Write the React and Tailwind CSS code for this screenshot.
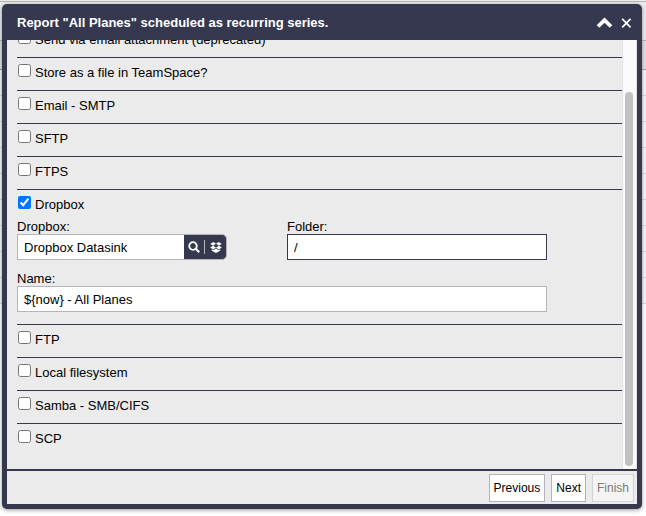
import React, { useState } from 'react';

const destinationsBefore = [
  { id: 'attachment', label: 'Send via email attachment (deprecated)' },
  { id: 'teamspace', label: 'Store as a file in TeamSpace?' },
  { id: 'smtp', label: 'Email - SMTP' },
  { id: 'sftp', label: 'SFTP' },
  { id: 'ftps', label: 'FTPS' },
];

const destinationsAfter = [
  { id: 'ftp', label: 'FTP' },
  { id: 'local', label: 'Local filesystem' },
  { id: 'samba', label: 'Samba - SMB/CIFS' },
  { id: 'scp', label: 'SCP' },
];

function Destination({ id, label, checked, onToggle, children }) {
  return (
    <div className="border-b border-[#36384f] last:border-b-0">
      <div className="flex h-8 items-start pt-1.5">
        <input
          id={id}
          type="checkbox"
          checked={checked}
          onChange={() => onToggle(id)}
          className="ml-px size-[13px] shrink-0 accent-[#0075ff]"
        />
        <label htmlFor={id} className="ml-1 pt-px leading-4">{label}</label>
      </div>
      {children}
    </div>
  );
}

// Grid of the page that the dialog is opened over
function PageBehind() {
  return (
    <div className="absolute inset-0 -z-10 overflow-hidden bg-white" aria-hidden="true">
      <div className="h-0.5 border-b border-[#b5b5b5] bg-[#ececec]" />
      <div className="h-[39px] border-b border-[#b5b5b5] bg-[#ececec]" />
      <div className="h-[29px] border-b border-[#a5a5a5] bg-[#e2e2e2]" />
      {Array.from({ length: 9 }, (_, i) => (
        <div key={i} className="h-[26px] border-b border-[#dcdcdc] bg-[#f7f7f7]" />
      ))}
    </div>
  );
}

export default function App() {
  const [checked, setChecked] = useState({ dropbox: true });
  const [folder, setFolder] = useState('/');
  const [name, setName] = useState('${now} - All Planes');
  const [datasink, setDatasink] = useState('Dropbox Datasink');

  const toggle = (id) => {
    setChecked((prev) => ({ ...prev, [id]: !prev[id] }));
  };

  return (
    <div className="relative isolate flex h-screen flex-col pt-1 pr-1 pb-[7px] pl-0.5 font-['Liberation_Sans',Arial,sans-serif] text-[13px] text-black">
      <PageBehind />

      <div
        role="dialog"
        aria-labelledby="dialog-title"
        className="flex min-h-0 flex-1 flex-col rounded-[5px] bg-[#36384f] px-[5px] pb-[5px] shadow-[0_1px_4px_rgba(0,0,0,0.4)]"
      >
        <header className="flex h-9 shrink-0 items-center pt-0.5 pr-[5px] pl-2.5 text-white">
          <h1 id="dialog-title" className="flex-1 text-[13px] font-bold">
            Report "All Planes" scheduled as recurring series.
          </h1>
          <button type="button" aria-label="Collapse" className="mr-2">
            <svg width="17" height="12" viewBox="0 0 17 12" fill="none" stroke="currentColor" strokeWidth="3.8">
              <path d="M2 9.5 8.5 3.2 15 9.5" />
            </svg>
          </button>
          <button type="button" aria-label="Close">
            <svg width="11" height="11" viewBox="0 0 11 11" fill="none" stroke="currentColor" strokeWidth="1.8">
              <path d="M1.2.9l8.4 8.4M9.6.9 1.2 9.3" />
            </svg>
          </button>
        </header>

        <div className="flex min-h-0 flex-1 bg-[#ebebeb]">
          {/* Reversed column keeps the list scrolled to its end */}
          <div className="flex min-w-0 flex-1 flex-col-reverse overflow-hidden pl-2.5">
            <div className="pb-[13px]">
              {destinationsBefore.map((d) => (
                <Destination key={d.id} {...d} checked={!!checked[d.id]} onToggle={toggle} />
              ))}

              <Destination id="dropbox" label="Dropbox" checked={!!checked.dropbox} onToggle={toggle}>
                <div className="mr-[75px] grid grid-cols-[270fr_260fr] pb-3">
                  <div>
                    <label htmlFor="datasink" className="block h-3 leading-[10px]">Dropbox:</label>
                    <div className="flex h-[26px] w-[210px] overflow-hidden rounded-r-[5px] border border-[#b5b5b5] bg-[#36384f] text-white">
                      <input
                        id="datasink"
                        type="text"
                        value={datasink}
                        onChange={(e) => setDatasink(e.target.value)}
                        className="min-w-0 flex-1 bg-white px-1.5 pt-0.5 text-black outline-none"
                      />
                      <button type="button" aria-label="Search" className="flex w-5 items-center justify-center">
                        <svg width="12" height="12" viewBox="0 0 12 12" fill="none" stroke="currentColor" strokeWidth="1.8">
                          <circle cx="5" cy="5" r="3.8" />
                          <path d="M7.8 7.8l3.4 3.4" strokeWidth="2.2" />
                        </svg>
                      </button>
                      <span className="my-[5px] w-px bg-[#b5b5b5]" />
                      <button type="button" aria-label="Browse Dropbox" className="flex w-[21px] items-center justify-center">
                        <svg width="12" height="11" viewBox="0 0 12 11" fill="currentColor">
                          <path d="M3.3 0 6 1.8 3 3.7.2 1.9zM8.7 0l3.1 1.9L9 3.7 6 1.8zM.2 5.5 3 3.7l3 1.9-2.7 1.8zM11.8 5.5 9 3.7 6 5.6l2.7 1.8zM1.8 7.2l1.6 1L6 6.4l2.6 1.8 1.6-1v1.6L6 11 1.8 8.8z" />
                        </svg>
                      </button>
                    </div>
                  </div>
                  <div>
                    <label htmlFor="folder" className="block h-3 leading-[10px]">Folder:</label>
                    <input
                      id="folder"
                      type="text"
                      value={folder}
                      onChange={(e) => setFolder(e.target.value)}
                      className="block h-[26px] w-full border border-[#36384f] bg-white px-1.5 outline-none"
                    />
                  </div>
                  <div className="col-span-2 pt-3.5">
                    <label htmlFor="name" className="block h-3 leading-[10px]">Name:</label>
                    <input
                      id="name"
                      type="text"
                      value={name}
                      onChange={(e) => setName(e.target.value)}
                      className="block h-[26px] w-full border border-[#b5b5b5] bg-white px-1.5 outline-none"
                    />
                  </div>
                </div>
              </Destination>

              {destinationsAfter.map((d) => (
                <Destination key={d.id} {...d} checked={!!checked[d.id]} onToggle={toggle} />
              ))}
            </div>
          </div>

          {/* Scrollbar */}
          <div className="flex w-[15px] flex-col items-center border-x border-[#e4e4e4] bg-[#fafafa] pt-[52px] pr-px pb-[3px]">
            <div className="w-2 flex-1 rounded-full bg-[#c1c1c1]" />
          </div>
        </div>

        <footer className="mt-0.5 flex h-[33px] shrink-0 justify-end gap-1.5 bg-[#ebebeb] px-[3px] pt-[3px] pb-0.5 text-xs">
          <button type="button" className="border border-[#b0b4bc] bg-white px-1">Previous</button>
          <button type="button" className="border border-[#b0b4bc] bg-white px-1">Next</button>
          <button type="button" disabled className="border border-[#d0d2d6] bg-[#f4f4f4] px-1 text-[#7a7a7a]">
            Finish
          </button>
        </footer>
      </div>
    </div>
  );
}
